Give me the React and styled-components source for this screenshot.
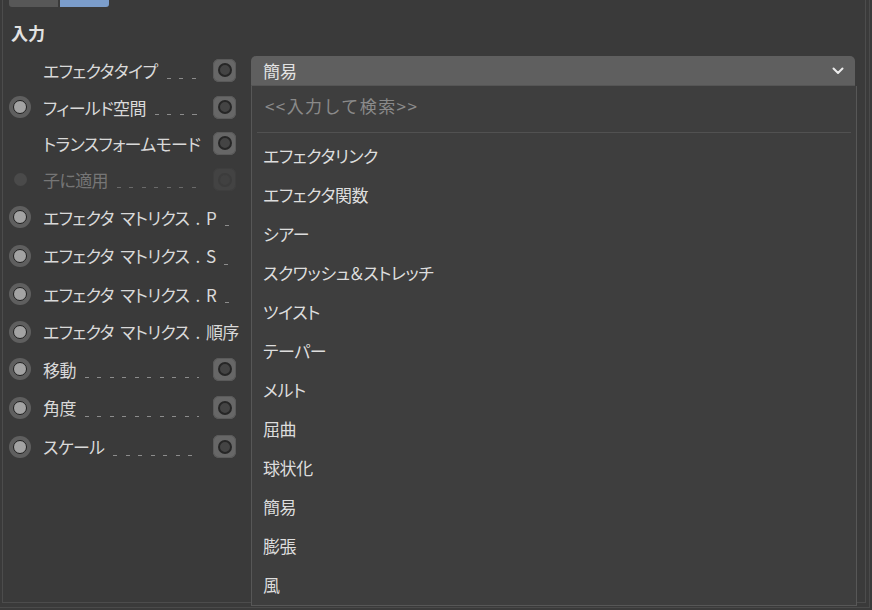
import styled, { createGlobalStyle } from "styled-components";

const GlobalStyle = createGlobalStyle`
  html, body {
    margin: 0;
    padding: 0;
    background: #3a3a3a;
  }
  body {
    font-family: "Noto Sans CJK JP", "Noto Sans", sans-serif;
    font-feature-settings: "palt";
    color: #d9d9d9;
  }
`;

const Window = styled.div`
  position: relative;
  width: 872px;
  height: 610px;
  overflow: hidden;
  background: #3a3a3a;
`;

const OuterFrame = styled.div`
  width: 869px;
  height: 607px;
  border-right: 1px solid #4a4a4a;
  border-bottom: 1px solid #4a4a4a;
`;

const Panel = styled.div`
  position: relative;
  margin-left: 2px;
  width: 862px;
  height: 602px;
  border-left: 1px solid #4c4c4c;
  border-right: 1px solid #4c4c4c;
  border-bottom: 1px solid #4c4c4c;
`;

const TabStrip = styled.div`
  display: flex;
  gap: 2px;
  padding-left: 6px;
  height: 7px;
`;

const Tab = styled.div`
  width: 49px;
  height: 7px;
  background: ${(p) => (p.$active ? "#7b9dcb" : "#575757")};
  border-radius: 0 0 ${(p) => (p.$active ? "3px 0" : "0 3px")};
`;

const SectionTitle = styled.div`
  margin: 15px 0 7px 8px;
  height: 22px;
  line-height: 22px;
  font-size: 17px;
  font-weight: 700;
  color: #e2e2e2;
`;

const Rows = styled.div`
  display: flex;
  flex-direction: column;
`;

const Row = styled.div`
  display: flex;
  align-items: center;
  height: ${(p) => p.$h}px;
  padding-left: 6px;
`;

const Param = styled.div`
  display: flex;
  align-items: center;
  width: 227px;
  height: 100%;
  flex-shrink: 0;
`;

const RadioSlot = styled.div`
  width: 22px;
  height: 22px;
  margin-right: 12px;
  display: flex;
  align-items: center;
  justify-content: center;
  flex-shrink: 0;
`;

const RadioOuter = styled.div`
  width: 22px;
  height: 22px;
  border-radius: 50%;
  background: #5f5f5f;
  display: flex;
  align-items: center;
  justify-content: center;
`;

const RadioInner = styled.div`
  width: 12px;
  height: 12px;
  border-radius: 50%;
  background: #a3a3a3;
  border: 1.5px solid #1f1f1f;
`;

const RadioDim = styled.div`
  width: 13px;
  height: 13px;
  border-radius: 50%;
  background: #4a4a4a;
`;

const Label = styled.span`
  font-size: 17px;
  letter-spacing: -0.6px;
  word-spacing: 3px;
  white-space: nowrap;
  min-width: 0;
  flex-shrink: 1;
  overflow: visible;
  color: ${(p) => (p.$disabled ? "#767676" : "#d9d9d9")};
`;

const Leader = styled.div`
  flex: 1;
  min-width: 0;
  align-self: flex-end;
  height: 1px;
  margin: 0 ${(p) => (p.$withKey ? "14px" : "0")} 10px 9px;
  background: repeating-linear-gradient(
    to right,
    ${(p) => (p.$disabled ? "#6a6a6a" : "#8c8c8c")} 0 4px,
    transparent 4px 12.5px
  );
`;

const KeyButton = styled.div`
  width: 23px;
  height: 23px;
  border-radius: 6px;
  flex-shrink: 0;
  background: ${(p) => (p.$disabled ? "#434343" : "#676767")};
  box-shadow: inset 0 0 0 1px ${(p) => (p.$disabled ? "#3e3e3e" : "#5a5a5a")};
  display: flex;
  align-items: center;
  justify-content: center;
`;

const KeyDot = styled.div`
  width: 10px;
  height: 10px;
  border-radius: 50%;
  background: ${(p) => (p.$disabled ? "#414141" : "#444")};
  border: 2px solid ${(p) => (p.$disabled ? "#3c3c3c" : "#262626")};
`;

const SelectWrap = styled.div`
  position: relative;
  margin-left: 15px;
  width: 604px;
  align-self: flex-end;
  margin-bottom: 3px;
`;

const SelectBox = styled.div`
  display: flex;
  align-items: center;
  justify-content: space-between;
  height: 29px;
  padding: 0 11px 0 12px;
  background: #5f5f5f;
  border-radius: 5px 5px 0 0;
  border-bottom: 1px solid #555;
  font-size: 17px;
  color: #e4e4e4;
`;

const Popup = styled.div`
  position: absolute;
  top: 30px;
  left: 0;
  width: 604px;
  height: 519px;
  background: #3e3e3e;
  border: 1px solid #575757;
  border-top: none;
  z-index: 2;
`;

const Search = styled.div`
  height: 40px;
  line-height: 40px;
  padding-left: 13px;
  font-size: 17px;
  font-feature-settings: normal;
  letter-spacing: 1.4px;
  color: #8a8a8a;
`;

const Divider = styled.div`
  height: 1px;
  margin: 6px 5px 3px;
  background: #515151;
`;

const Item = styled.div`
  height: 39px;
  line-height: 39px;
  padding-left: 11px;
  font-size: 17px;
  letter-spacing: -0.4px;
  color: #dddddd;
  white-space: nowrap;
`;

const Chevron = () => (
  <svg width="12" height="8" viewBox="0 0 12 8">
    <polyline
      points="1.5,1.5 6,6 10.5,1.5"
      fill="none"
      stroke="#ececec"
      strokeWidth="2"
      strokeLinecap="round"
      strokeLinejoin="round"
    />
  </svg>
);

const params = [
  { label: "エフェクタタイプ", radio: null, key: true, select: true, h: 38 },
  { label: "フィールド空間", radio: "on", key: true, h: 36 },
  { label: "トランスフォームモード", radio: null, key: true, h: 36 },
  { label: "子に適用", radio: "dim", key: true, disabled: true, h: 37 },
  { label: "エフェクタ マトリクス . P", radio: "on", key: false, h: 38 },
  { label: "エフェクタ マトリクス . S", radio: "on", key: false, h: 39 },
  { label: "エフェクタ マトリクス . R", radio: "on", key: false, h: 38 },
  { label: "エフェクタ マトリクス . 順序", radio: "on", key: false, h: 37 },
  { label: "移動", radio: "on", key: true, h: 38 },
  { label: "角度", radio: "on", key: true, h: 39 },
  { label: "スケール", radio: "on", key: true, h: 39 },
];

const effectors = [
  "エフェクタリンク",
  "エフェクタ関数",
  "シアー",
  "スクワッシュ＆ストレッチ",
  "ツイスト",
  "テーパー",
  "メルト",
  "屈曲",
  "球状化",
  "簡易",
  "膨張",
  "風",
];

const Radio = ({ kind }) => (
  <RadioSlot>
    {kind === "on" && (
      <RadioOuter>
        <RadioInner />
      </RadioOuter>
    )}
    {kind === "dim" && <RadioDim />}
  </RadioSlot>
);

export default function App() {
  return (
    <Window>
      <GlobalStyle />
      <OuterFrame>
        <Panel>
          <TabStrip>
            <Tab />
            <Tab $active />
          </TabStrip>
          <SectionTitle>入力</SectionTitle>
          <Rows>
            {params.map((p) => (
              <Row key={p.label} $h={p.h}>
                <Param>
                  <Radio kind={p.radio} />
                  <Label $disabled={p.disabled}>{p.label}</Label>
                  <Leader $withKey={p.key} $disabled={p.disabled} />
                  {p.key && (
                    <KeyButton $disabled={p.disabled}>
                      <KeyDot $disabled={p.disabled} />
                    </KeyButton>
                  )}
                </Param>
                {p.select && (
                  <SelectWrap>
                    <SelectBox>
                      <span>簡易</span>
                      <Chevron />
                    </SelectBox>
                    <Popup>
                      <Search>{"<<入力して検索>>"}</Search>
                      <Divider />
                      {effectors.map((e) => (
                        <Item key={e}>{e}</Item>
                      ))}
                    </Popup>
                  </SelectWrap>
                )}
              </Row>
            ))}
          </Rows>
        </Panel>
      </OuterFrame>
    </Window>
  );
}
